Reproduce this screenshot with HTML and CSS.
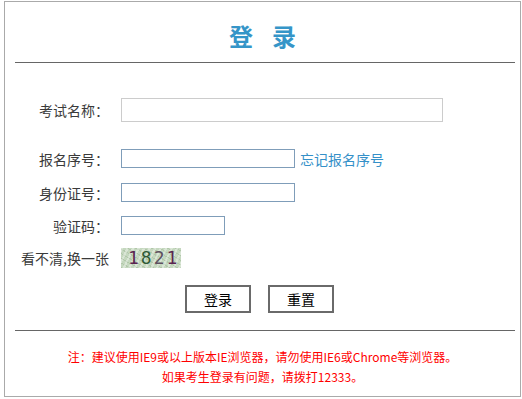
FILE: index.html
```html
<!DOCTYPE html>
<html lang="zh-CN">
<head>
    <meta charset="UTF-8">
    <title>登录</title>
    <link rel="stylesheet" href="styles.css">
</head>
<body>
    <div class="login-box">
        <h1 class="login-title">登录</h1>
        <div class="rule"></div>

        <form class="login-form" onsubmit="return false;">
            <div class="row row-exam">
                <label class="label" for="exam">考试名称：</label>
                <input type="text" id="exam" class="field field-wide">
            </div>
            <div class="row row-num">
                <label class="label" for="bmxh">报名序号：</label>
                <input type="text" id="bmxh" class="field">
                <a href="#" class="forget-link">忘记报名序号</a>
            </div>
            <div class="row row-id">
                <label class="label" for="sfzh">身份证号：</label>
                <input type="text" id="sfzh" class="field">
            </div>
            <div class="row row-code">
                <label class="label" for="yzm">验证码：</label>
                <input type="text" id="yzm" class="field field-short">
            </div>
            <div class="row row-captcha">
                <span class="label">看不清,换一张</span>
                <div class="captcha">
                    <span class="d1">1</span><span class="d2">8</span><span class="d3">2</span><span class="d1">1</span>
                </div>
            </div>
            <div class="actions">
                <button type="submit" class="btn">登录</button>
                <button type="reset" class="btn">重置</button>
            </div>
        </form>

        <div class="rule"></div>
        <div class="notes">
            <p>注：建议使用IE9或以上版本IE浏览器，请勿使用IE6或Chrome等浏览器。</p>
            <p>如果考生登录有问题，请拨打12333。</p>
        </div>
    </div>
</body>
</html>
```

FILE: styles.css
```css
body {
    margin: 1px 0 0 4px;
    font-family: 'Noto Sans CJK SC', sans-serif;
    color: #333;
    background: #fff;
}

.login-box {
    width: 517px;
    height: 396px;
    box-sizing: border-box;
    border: 1px solid #aaa;
}

.login-title {
    margin: 0;
    padding-top: 19px;
    height: 30px;
    line-height: 30px;
    font-size: 24px;
    font-weight: bold;
    color: #3595c8;
    text-align: center;
    letter-spacing: 19px;
    text-indent: 19px;
    margin-bottom: 11px;
}

.rule {
    width: 500px;
    height: 1px;
    margin-left: 10px;
    background: #666;
}

.login-form {
    margin: 35px 0 0;
}

.row {
    display: flex;
    align-items: center;
}

.label {
    width: 104px;
    flex: none;
    margin-right: 12px;
    text-align: right;
    font-size: 14px;
    color: #3a3a3a;
    white-space: nowrap;
}

.field {
    box-sizing: border-box;
    width: 174px;
    height: 19px;
    margin: 0;
    padding: 0 3px;
    border: 1px solid #7f9db9;
    font-size: 12px;
}

.field-wide {
    width: 322px;
    height: 24px;
    border-color: #ccc;
}

.field-short {
    width: 104px;
}

.row-exam { height: 24px; }
.row-num { height: 19px; margin-top: 27px; }
.row-id { height: 19px; margin-top: 15px; }
.row-code { height: 19px; margin-top: 14px; }
.row-captcha { height: 20px; margin-top: 13px; }

.forget-link {
    margin-left: 5px;
    font-size: 14px;
    color: #3590c8;
    text-decoration: none;
}

.captcha {
    width: 60px;
    height: 20px;
    box-sizing: border-box;
    padding-left: 7px;
    background:
        repeating-linear-gradient(115deg, rgba(255,255,255,0.35) 0 2px, transparent 2px 5px),
        repeating-linear-gradient(30deg, rgba(120,150,110,0.25) 0 1px, transparent 1px 4px),
        #c5d8bf;
    font-family: 'DejaVu Sans Mono', monospace;
    font-size: 18px;
    line-height: 20px;
    letter-spacing: 2px;
}

.d1 { color: #5a2450; }
.d2 { color: #2f5a36; }
.d3 { color: #5e5060; }

.actions {
    display: flex;
    gap: 17px;
    margin-top: 17px;
    padding-left: 180px;
}

.btn {
    width: 66px;
    height: 28px;
    box-sizing: border-box;
    border: 2px solid #6a6a6a;
    background: #fff;
    font-family: 'Noto Sans CJK SC', sans-serif;
    font-size: 14px;
    color: #000;
    padding: 0;
    cursor: pointer;
}

.login-form + .rule {
    margin-top: 17px;
}

.notes {
    margin-top: 16px;
    text-align: center;
    color: #f00;
    font-size: 12px;
}

.notes p {
    margin: 0;
    line-height: 20px;
}
```
